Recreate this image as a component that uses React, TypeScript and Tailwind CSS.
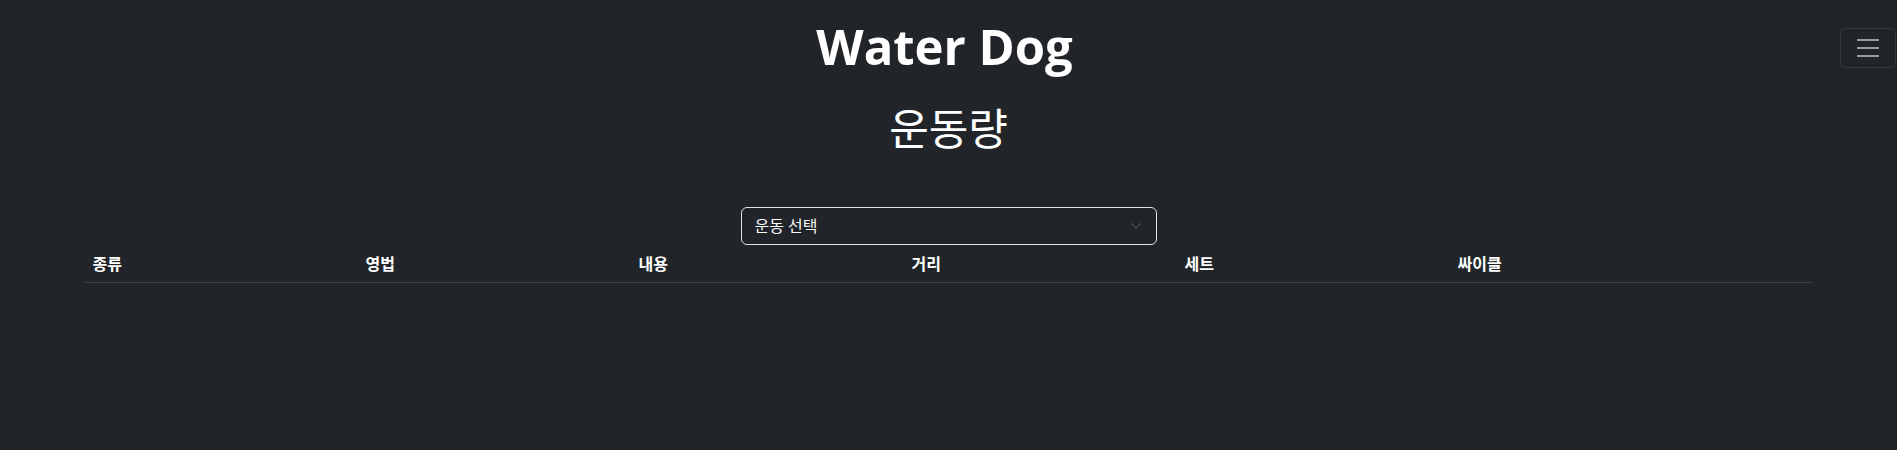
const columns = ["종류", "영법", "내용", "거리", "세트", "싸이클"];

function MenuButton() {
  return (
    <button
      type="button"
      className="absolute right-px top-[28px] flex h-10 w-14 items-center justify-center rounded-md border border-white/10"
    >
      <svg width="30" height="30" viewBox="0 0 30 30" fill="none">
        <path d="M4 7h22M4 15h22M4 23h22" stroke="rgba(255,255,255,0.55)" strokeWidth="2" strokeLinecap="butt" />
      </svg>
    </button>
  );
}

export default function App() {
  return (
    <div
      className="min-h-screen bg-[#212529] text-white"
      style={{ fontFamily: '"Open Sans", "Noto Sans CJK KR", sans-serif' }}
    >
      <div className="relative">
        <MenuButton />
        <h1 className="pr-2 pt-[17px] text-center text-[49px] font-bold leading-[1.2]">Water Dog</h1>
        <h2 className="mt-[27px] text-center text-[43px] font-normal leading-[1.2]">운동량</h2>
      </div>

      <div className="mt-[53px] flex justify-center">
        <div className="flex h-[38px] w-[416px] items-center justify-between rounded-md border border-[#dee2e6] pl-[13px] pr-[14px] text-base text-[#f8f9fa]">
          <span>운동 선택</span>
          <svg width="12" height="8" viewBox="0 0 16 10" fill="none">
            <path d="M2 2l6 6 6-6" stroke="#41464c" strokeWidth="2" strokeLinecap="round" strokeLinejoin="round" />
          </svg>
        </div>
      </div>

      <div className="mx-auto w-[1728px]">
        <div className="grid grid-cols-[repeat(5,273px)_1fr] border-b border-[#3c4146]">
          {columns.map((c) => (
            <div key={c} className="px-2 pb-[6px] pt-[7px] text-base font-bold leading-6">
              {c}
            </div>
          ))}
        </div>
      </div>
    </div>
  );
}
